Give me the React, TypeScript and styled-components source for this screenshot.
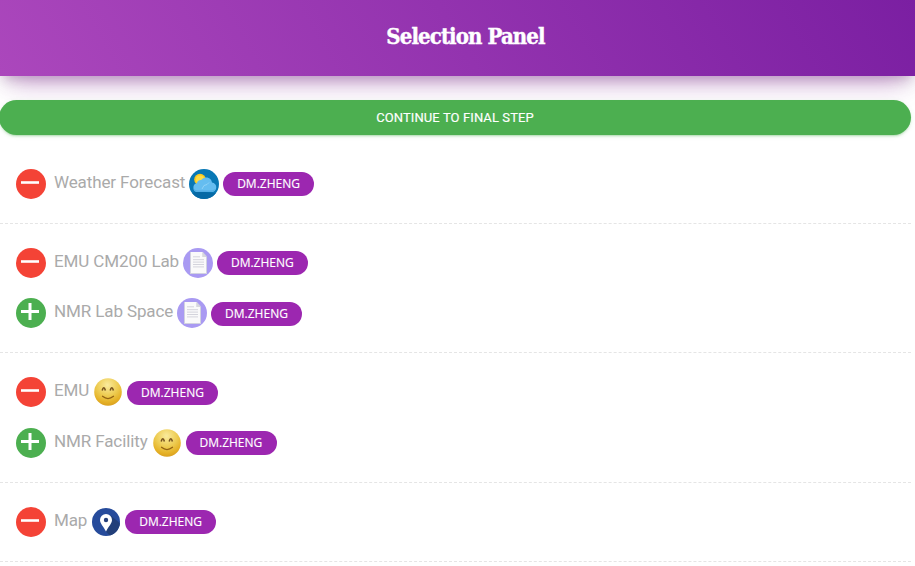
import React from "react";
import styled, { createGlobalStyle } from "styled-components";

const GlobalStyle = createGlobalStyle`
  * { box-sizing: border-box; }
  body {
    margin: 0;
    background: #fff;
    overflow: hidden;
    font-family: Roboto, "Liberation Sans", sans-serif;
  }
`;

const Page = styled.main`
  height: 566px;
  overflow: hidden;
`;

const Header = styled.header`
  display: flex;
  align-items: center;
  justify-content: center;
  height: 76px;
  padding: 0 0 4px 16px;
  background: linear-gradient(60deg, #ab47bc, #7b1fa2);
  box-shadow: 0 16px 26px -10px rgba(156, 39, 176, 0.36), 0 4px 25px 0 rgba(0, 0, 0, 0.12),
    0 8px 10px -5px rgba(80, 30, 90, 0.2);
`;

const Title = styled.h1`
  margin: 0;
  color: #fff;
  font: 700 22px/32px "Roboto Slab", "DejaVu Serif Condensed", "DejaVu Serif", serif;
  font-stretch: condensed;
  letter-spacing: -0.9px;
  -webkit-text-stroke: 0.4px #fff;
  white-space: nowrap;
`;

const ContinueButton = styled.button`
  display: block;
  position: relative;
  width: 912px;
  height: 35px;
  margin: 24px 0 9.9px -1px;
  padding: 0;
  border: 0;
  border-radius: 18px;
  background: #4caf50;
  color: #fff;
  font: 400 13px/35px Roboto, sans-serif;
  letter-spacing: 0.1px;
  -webkit-text-stroke: 0.15px #fff;
  box-shadow: 0 2px 2px 0 rgba(76, 175, 80, 0.14), 0 3px 1px -2px rgba(76, 175, 80, 0.2),
    0 1px 5px 0 rgba(76, 175, 80, 0.12);
`;

const Group = styled.section`
  width: 911px;
  padding: 13.8px 0 13.8px 16px;
  border-bottom: 1px dashed #e5e5e5;
`;

const Row = styled.div`
  display: flex;
  align-items: center;
  height: 50.4px;
`;

const Toggle = styled.button<{ $added: boolean }>`
  width: 30px;
  height: 30px;
  padding: 0;
  border: 0;
  border-radius: 50%;
  background: ${(p) => (p.$added ? "#f44336" : "#4caf50")};
  svg { display: block; }
`;

const Label = styled.span`
  margin: 0 4px 3.6px 8px;
  color: #aaa;
  font-size: 17px;
  line-height: 24px;
  letter-spacing: -0.11px;
  white-space: nowrap;
`;

const Picture = styled.svg`
  flex: none;
  width: 30px;
  height: 30px;
`;

const Badge = styled.span`
  height: 24px;
  margin: 0.6px 0 0 3.9px;
  padding: 0 14.3px 0 14px;
  border-radius: 12px;
  background: #9c27b0;
  color: #fff;
  font: 500 12px/24px "Open Sans", "Noto Sans", sans-serif;
  -webkit-text-stroke: 0.15px #fff;
`;

const Weather = () => (
  <Picture viewBox="0 0 30 30">
    <circle cx="15" cy="15" r="15" fill="#0878b5" />
    <path d="M3 24C9 21 22 24 27 24A15 15 0 0 1 3 24Z" fill="#0669a5" />
    <circle cx="11" cy="10.5" r="5.8" fill="#fdcb20" />
    <circle cx="11" cy="10.5" r="4" fill="#ffdd45" />
    <path d="M8.5 23a4.4 4.4 0 0 1-.6-8.7 4.2 4.2 0 0 1 4.2-3.2A6 6 0 0 1 23 13.6a4.7 4.7 0 0 1-.8 9.4Z" fill="#65bdf0" />
    <path d="M8.5 23H22q3.5 0 4-3-2 1.5-5 1.5H9q-3 0-4.5-2 .5 3 4 3.5" fill="#53aee5" />
    <path d="m13 20 2-3.5 3-1 2-2" fill="none" stroke="#9bd7f8" strokeWidth=".8" />
  </Picture>
);

const Document = () => (
  <Picture viewBox="0 0 30 30">
    <circle cx="15" cy="15" r="15" fill="#a99af2" />
    <path d="M7 4H20l4 4.5V26H7Z" fill="#d1d2df" />
    <path d="M8 4H19.5v5H23v16H8Z" fill="#fafafa" />
    <path d="M19.5 4.3V9H23Z" fill="#d8d8de" />
    <path d="M10 8.8h7M10 11.7h11M10 14.1h11M10 16.5h11M10 18.9h11" stroke="#d4d4dc" />
  </Picture>
);

const Smile = () => (
  <Picture viewBox="0 0 30 30">
    <defs>
      <radialGradient id="face" cx=".48" cy=".25" r=".78">
        <stop stopColor="#faeb9d" />
        <stop offset=".5" stopColor="#edcb51" />
        <stop offset=".8" stopColor="#e5b126" />
        <stop offset="1" stopColor="#d79c1f" />
      </radialGradient>
    </defs>
    <circle cx="15" cy="15" r="13.8" fill="url(#face)" />
    <path d="M9.2 13.4q1.6-5.4 3.2 0M17.2 13.4q1.6-5.4 3.2 0" fill="none" stroke="#75511e" strokeWidth="1.6" />
    <path d="M9.5 19.3q5.5 4.6 11 0" fill="none" stroke="#946313" strokeWidth="1.3" strokeLinecap="round" />
  </Picture>
);

const MapPin = () => (
  <Picture viewBox="0 0 30 30">
    <defs>
      <clipPath id="disc"><circle cx="15" cy="15" r="14" /></clipPath>
    </defs>
    <circle cx="15" cy="15" r="14" fill="#264b9b" />
    <path d="m19 8 11 9v13H20l-5-5.5Z" fill="#223f79" clipPath="url(#disc)" />
    <path d="M15 24.5C12.5 19.5 9 16.5 9 13a6 6 0 0 1 12 0c0 3.5-3.5 6.5-6 11.5Z" fill="#fff" />
    <circle cx="15" cy="13" r="2.2" fill="#253f7a" />
  </Picture>
);

const pictures = { weather: Weather, document: Document, smile: Smile, map: MapPin };

type Item = { name: string; picture: keyof typeof pictures; added: boolean };

const groups: Item[][] = [
  [{ name: "Weather Forecast", picture: "weather", added: true }],
  [
    { name: "EMU CM200 Lab", picture: "document", added: true },
    { name: "NMR Lab Space", picture: "document", added: false },
  ],
  [
    { name: "EMU", picture: "smile", added: true },
    { name: "NMR Facility", picture: "smile", added: false },
  ],
  [{ name: "Map", picture: "map", added: true }],
];

function ItemRow({ name, picture, added }: Item) {
  const Icon = pictures[picture];
  return (
    <Row>
      <Toggle $added={added} aria-label={added ? `Remove ${name}` : `Add ${name}`}>
        <svg width="30" height="30" viewBox="0 0 30 30">
          <path d={added ? "M5 13.5h18" : "M5 13.5h18M14 5v17"} stroke="#fff" strokeWidth={added ? 2.6 : 3} />
        </svg>
      </Toggle>
      <Label>{name}</Label>
      <Icon />
      <Badge>DM.ZHENG</Badge>
    </Row>
  );
}

export default function App() {
  return (
    <Page>
      <GlobalStyle />
      <Header>
        <Title>Selection Panel</Title>
      </Header>
      <ContinueButton>CONTINUE TO FINAL STEP</ContinueButton>
      {groups.map((items) => (
        <Group key={items[0].name}>
          {items.map((item) => (
            <ItemRow key={item.name} {...item} />
          ))}
        </Group>
      ))}
    </Page>
  );
}
